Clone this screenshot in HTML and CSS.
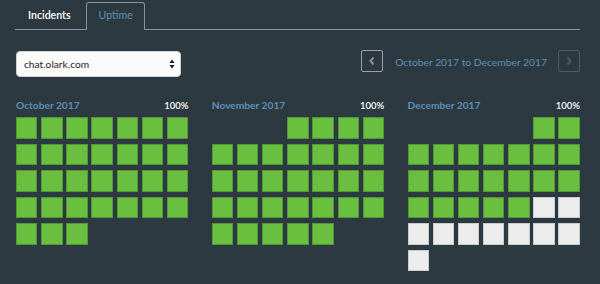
FILE: index.html
```html
<!DOCTYPE html>
<html>
<head>
<meta charset="utf-8">
<link rel="stylesheet" href="styles.css">
</head>
<body>
<div class="page">
  <div class="tabs">
    <div class="tab">Incidents</div>
    <div class="tab active">Uptime</div>
  </div>
  <div class="toolbar">
    <div class="select">
      <span>chat.olark.com</span>
      <svg class="updown" width="6" height="10" viewBox="0 0 6 10"><path d="M3 0.5 L5.6 4 H0.4 Z M3 9.5 L5.6 6 H0.4 Z" fill="#222"/></svg>
    </div>
    <div class="range">
      <div class="navbtn"><svg width="8" height="10" viewBox="0 0 8 10"><path d="M5.5 1.5 L2.5 5 L5.5 8.5" fill="none" stroke="#8a8f92" stroke-width="2"/></svg></div>
      <div class="rangetext">October 2017 to December 2017</div>
      <div class="navbtn disabled"><svg width="8" height="10" viewBox="0 0 8 10"><path d="M2.5 1.5 L5.5 5 L2.5 8.5" fill="none" stroke="#4d575c" stroke-width="2"/></svg></div>
    </div>
  </div>
  <div class="months">
    <div class="month">
      <div class="mhead"><span class="mname">October 2017</span><span class="pct">100%</span></div>
      <div class="grid">
        <i class="d"></i><i class="d"></i><i class="d"></i><i class="d"></i><i class="d"></i><i class="d"></i><i class="d"></i>
        <i class="d"></i><i class="d"></i><i class="d"></i><i class="d"></i><i class="d"></i><i class="d"></i><i class="d"></i>
        <i class="d"></i><i class="d"></i><i class="d"></i><i class="d"></i><i class="d"></i><i class="d"></i><i class="d"></i>
        <i class="d"></i><i class="d"></i><i class="d"></i><i class="d"></i><i class="d"></i><i class="d"></i><i class="d"></i>
        <i class="d"></i><i class="d"></i><i class="d"></i>
      </div>
    </div>
    <div class="month">
      <div class="mhead"><span class="mname">November 2017</span><span class="pct">100%</span></div>
      <div class="grid">
        <i class="b"></i><i class="b"></i><i class="b"></i><i class="d"></i><i class="d"></i><i class="d"></i><i class="d"></i>
        <i class="d"></i><i class="d"></i><i class="d"></i><i class="d"></i><i class="d"></i><i class="d"></i><i class="d"></i>
        <i class="d"></i><i class="d"></i><i class="d"></i><i class="d"></i><i class="d"></i><i class="d"></i><i class="d"></i>
        <i class="d"></i><i class="d"></i><i class="d"></i><i class="d"></i><i class="d"></i><i class="d"></i><i class="d"></i>
        <i class="d"></i><i class="d"></i><i class="d"></i><i class="d"></i><i class="d"></i>
      </div>
    </div>
    <div class="month">
      <div class="mhead"><span class="mname">December 2017</span><span class="pct">100%</span></div>
      <div class="grid">
        <i class="b"></i><i class="b"></i><i class="b"></i><i class="b"></i><i class="b"></i><i class="d"></i><i class="d"></i>
        <i class="d"></i><i class="d"></i><i class="d"></i><i class="d"></i><i class="d"></i><i class="d"></i><i class="d"></i>
        <i class="d"></i><i class="d"></i><i class="d"></i><i class="d"></i><i class="d"></i><i class="d"></i><i class="d"></i>
        <i class="d"></i><i class="d"></i><i class="d"></i><i class="d"></i><i class="d"></i><i class="f"></i><i class="f"></i>
        <i class="f"></i><i class="f"></i><i class="f"></i><i class="f"></i><i class="f"></i><i class="f"></i><i class="f"></i>
        <i class="f"></i>
      </div>
    </div>
  </div>
</div>
</body>
</html>
```
FILE: styles.css
```css
html, body {
  margin: 0;
  padding: 0;
  background: #2d3940;
}
body {
  font-family: Lato, "Open Sans", sans-serif;
  color: #fff;
  width: 600px;
  height: 284px;
  overflow: hidden;
}
.page {
  padding: 2px 20px 0 15px;
}
.tabs {
  display: flex;
  align-items: flex-end;
  height: 27px;
  border-bottom: 1px solid #87939a;
}
.tab {
  height: 27px;
  line-height: 24px;
  padding: 0 14px 0 12px;
  font-size: 10.6px;
  font-weight: 600;
  color: #fff;
  border: 1px solid transparent;
  border-bottom: none;
  margin-bottom: -1px;
  box-sizing: content-box;
}
.tab.active {
  color: #5e90b6;
  border-color: #87939a;
  background: #2d3940;
  border-radius: 3px 3px 0 0;
  padding: 0 11px 0 12px;
  font-weight: 400;
}
.toolbar {
  display: flex;
  justify-content: space-between;
  align-items: flex-start;
  margin-top: 21px;
  padding-left: 1px;
}
.select {
  width: 165px;
  height: 26px;
  box-sizing: border-box;
  background: #fbfbfb;
  border: 1px solid #d0d0d0;
  border-radius: 4px;
  display: flex;
  align-items: center;
  justify-content: space-between;
  padding: 0 5px 0 7px;
  color: #1f1f1f;
  font-size: 10.2px;
}
.range {
  display: flex;
  align-items: center;
  margin-top: -1px;
}
.navbtn {
  width: 22px;
  height: 22px;
  box-sizing: border-box;
  border: 1px solid #9aa0a3;
  border-radius: 2px;
  display: flex;
  align-items: center;
  justify-content: center;
}
.navbtn.disabled {
  border-color: #505a5f;
}
.rangetext {
  margin: 0 11px 0 12px;
  padding-top: 2px;
  color: #5e90b6;
  font-size: 10.3px;
}
.months {
  display: flex;
  gap: 23.3px;
  margin-top: 21px;
  padding-left: 1px;
}
.month {
  width: 172.5px;
}
.mhead {
  display: flex;
  justify-content: space-between;
  align-items: center;
  height: 14px;
  margin-bottom: 5.3px;
}
.mname {
  color: #5e90b6;
  font-weight: 700;
  font-size: 10.2px;
}
.pct {
  font-size: 9.5px;
  font-weight: 600;
  color: #fff;
}
.grid {
  display: grid;
  grid-template-columns: repeat(7, 21.4px);
  grid-auto-rows: 21.3px;
  column-gap: 3.78px;
  row-gap: 5.2px;
}
.grid i {
  display: block;
  box-sizing: border-box;
}
.grid .d {
  background: #6abf3f;
  border: 1px solid #4f9a36;
}
.grid .f {
  background: #ececec;
  border: 1px solid #c9cbcc;
}
```
